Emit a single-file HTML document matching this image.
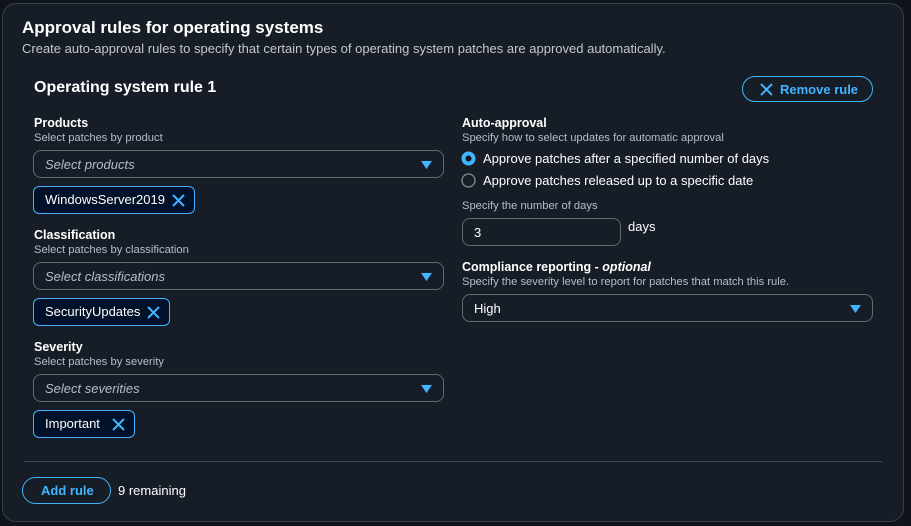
<!DOCTYPE html>
<html><head><meta charset="utf-8"><style>
*{box-sizing:border-box;margin:0;padding:0}
body{width:911px;height:526px;background:#0f141a;font-family:"Liberation Sans",sans-serif;color:#ebebf0;position:relative;overflow:hidden}
.panel{position:absolute;left:2px;top:3px;width:902px;height:519px;background:#161d26;border:1px solid #3a414b;border-radius:14px}
.a{position:absolute;white-space:nowrap}
.h1{font-size:17px;font-weight:bold;color:#fff}
.sub{font-size:13px;color:#c6c6cd}
.h2{font-size:16px;font-weight:bold;color:#fff}
.lab{font-size:12.5px;font-weight:bold;color:#fff}
.desc{font-size:11.2px;color:#b6bec9}
.sel{position:absolute;height:28px;border:1px solid #656871;border-radius:8px;background:#161d26}
.sel i{position:absolute;left:11px;top:6px;font-size:13px;color:#b6bec9}
.sel .v{position:absolute;left:11px;top:6px;font-size:13px;color:#fff}
.sel svg{position:absolute;right:11px;top:10px}
.tok{position:absolute;height:28px;border:1px solid #42b4ff;border-radius:6px;background:#001129;font-size:13px;color:#fff;padding:5px 0 0 11px}
.tok svg{position:absolute;right:9px;top:7px}
.btn{position:absolute;border:1px solid #42b4ff;border-radius:16px;color:#42b4ff;font-weight:bold;font-size:13px}
.txt{font-size:13px;color:#fff}
</style></head><body>
<div class="panel"></div>
<div class="a h1" style="left:22px;top:18px">Approval rules for operating systems</div>
<div class="a sub" style="left:22px;top:41px">Create auto-approval rules to specify that certain types of operating system patches are approved automatically.</div>
<div class="a h2" style="left:34px;top:79px">Operating system rule 1</div>
<div class="btn" style="left:742px;top:76px;width:131px;height:26px">
<svg style="position:absolute;left:17px;top:6px" width="13" height="13" viewBox="0 0 13 13"><path d="M1 1L12 12M12 1L1 12" stroke="#42b4ff" stroke-width="2"/></svg>
<span class="a" style="left:37px;top:5px">Remove rule</span></div>

<div class="a lab" style="left:34px;top:116px">Products</div>
<div class="a desc" style="left:34px;top:132px">Select patches by product</div>
<div class="sel" style="left:33px;top:150px;width:411px"><i>Select products</i><svg width="11" height="8"><path d="M0 0H11L5.5 8Z" fill="#42b4ff"/></svg></div>
<div class="tok" style="left:33px;top:186px;width:162px">WindowsServer2019<svg width="13" height="13" viewBox="0 0 13 13"><path d="M1 1L12 12M12 1L1 12" stroke="#42b4ff" stroke-width="2"/></svg></div>

<div class="a lab" style="left:34px;top:228px">Classification</div>
<div class="a desc" style="left:34px;top:244px">Select patches by classification</div>
<div class="sel" style="left:33px;top:262px;width:411px"><i>Select classifications</i><svg width="11" height="8"><path d="M0 0H11L5.5 8Z" fill="#42b4ff"/></svg></div>
<div class="tok" style="left:33px;top:298px;width:137px">SecurityUpdates<svg width="13" height="13" viewBox="0 0 13 13"><path d="M1 1L12 12M12 1L1 12" stroke="#42b4ff" stroke-width="2"/></svg></div>

<div class="a lab" style="left:34px;top:340px">Severity</div>
<div class="a desc" style="left:34px;top:356px">Select patches by severity</div>
<div class="sel" style="left:33px;top:374px;width:411px"><i>Select severities</i><svg width="11" height="8"><path d="M0 0H11L5.5 8Z" fill="#42b4ff"/></svg></div>
<div class="tok" style="left:33px;top:410px;width:102px">Important<svg width="13" height="13" viewBox="0 0 13 13"><path d="M1 1L12 12M12 1L1 12" stroke="#42b4ff" stroke-width="2"/></svg></div>

<div class="a lab" style="left:462px;top:116px">Auto-approval</div>
<div class="a desc" style="left:462px;top:132px">Specify how to select updates for automatic approval</div>
<svg class="a" style="left:461px;top:151px" width="15" height="15"><circle cx="7.5" cy="7.5" r="5" fill="#0f141a" stroke="#42b4ff" stroke-width="4"/></svg>
<div class="a txt" style="left:483px;top:151px">Approve patches after a specified number of days</div>
<svg class="a" style="left:461px;top:173px" width="15" height="15"><circle cx="7.5" cy="7.5" r="6.5" fill="none" stroke="#8c8c94" stroke-width="1.3"/></svg>
<div class="a txt" style="left:483px;top:173px">Approve patches released up to a specific date</div>
<div class="a desc" style="left:462px;top:200px">Specify the number of days</div>
<div class="sel" style="left:462px;top:218px;width:159px"><span class="v">3</span></div>
<div class="a txt" style="left:628px;top:219px">days</div>
<div class="a lab" style="left:462px;top:260px">Compliance reporting - <i>optional</i></div>
<div class="a desc" style="left:462px;top:276px">Specify the severity level to report for patches that match this rule.</div>
<div class="sel" style="left:462px;top:294px;width:411px"><span class="v">High</span><svg width="11" height="8"><path d="M0 0H11L5.5 8Z" fill="#42b4ff"/></svg></div>

<div class="a" style="left:24px;top:461px;width:858px;height:1px;background:#414750"></div>
<div class="btn" style="left:22px;top:477px;width:89px;height:27px"><span class="a" style="left:18px;top:5px">Add rule</span></div>
<div class="a txt" style="left:118px;top:483px">9 remaining</div>
</body></html>
